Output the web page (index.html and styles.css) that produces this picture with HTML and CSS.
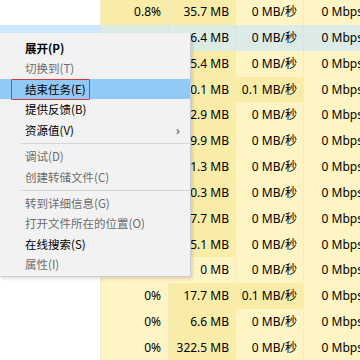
FILE: index.html
```html
<!DOCTYPE html>
<html lang="zh-CN">
  <head>
    <meta charset="UTF-8" />
    <meta name="viewport" content="width=device-width, initial-scale=1.0" />
    <title>任务管理器</title>
    <link rel="stylesheet" href="styles.css">
  </head>
  <body>
    <div class="screen">
      <div class="proc-table">
        <div class="row">
          <div class="cell name"></div>
          <div class="cell cpu heat-2">0.8%</div>
          <div class="cell mem heat-2">35.7 MB</div>
          <div class="cell disk">0 MB/秒</div>
          <div class="cell net">0 Mbps</div>
        </div>
        <div class="row row-selected">
          <div class="cell name"></div>
          <div class="cell cpu">0.6%</div>
          <div class="cell mem">946.4 MB</div>
          <div class="cell disk">0 MB/秒</div>
          <div class="cell net">0 Mbps</div>
        </div>
        <div class="row">
          <div class="cell name"></div>
          <div class="cell cpu">0%</div>
          <div class="cell mem heat-2">15.4 MB</div>
          <div class="cell disk">0 MB/秒</div>
          <div class="cell net">0 Mbps</div>
        </div>
        <div class="row">
          <div class="cell name"></div>
          <div class="cell cpu">0%</div>
          <div class="cell mem heat-2">20.1 MB</div>
          <div class="cell disk heat-2">0.1 MB/秒</div>
          <div class="cell net">0 Mbps</div>
        </div>
        <div class="row">
          <div class="cell name"></div>
          <div class="cell cpu">0%</div>
          <div class="cell mem heat-2">12.9 MB</div>
          <div class="cell disk">0 MB/秒</div>
          <div class="cell net">0 Mbps</div>
        </div>
        <div class="row">
          <div class="cell name"></div>
          <div class="cell cpu">0%</div>
          <div class="cell mem heat-2">29.9 MB</div>
          <div class="cell disk">0 MB/秒</div>
          <div class="cell net">0 Mbps</div>
        </div>
        <div class="row">
          <div class="cell name"></div>
          <div class="cell cpu">0%</div>
          <div class="cell mem heat-2">11.3 MB</div>
          <div class="cell disk">0 MB/秒</div>
          <div class="cell net">0 Mbps</div>
        </div>
        <div class="row">
          <div class="cell name"></div>
          <div class="cell cpu">0%</div>
          <div class="cell mem heat-2">10.3 MB</div>
          <div class="cell disk">0 MB/秒</div>
          <div class="cell net">0 Mbps</div>
        </div>
        <div class="row">
          <div class="cell name"></div>
          <div class="cell cpu">0%</div>
          <div class="cell mem heat-2">17.7 MB</div>
          <div class="cell disk">0 MB/秒</div>
          <div class="cell net">0 Mbps</div>
        </div>
        <div class="row">
          <div class="cell name"></div>
          <div class="cell cpu">0%</div>
          <div class="cell mem heat-2">15.1 MB</div>
          <div class="cell disk">0 MB/秒</div>
          <div class="cell net">0 Mbps</div>
        </div>
        <div class="row">
          <div class="cell name"></div>
          <div class="cell cpu">0%</div>
          <div class="cell mem">0 MB</div>
          <div class="cell disk">0 MB/秒</div>
          <div class="cell net">0 Mbps</div>
        </div>
        <div class="row">
          <div class="cell name"></div>
          <div class="cell cpu">0%</div>
          <div class="cell mem heat-2">17.7 MB</div>
          <div class="cell disk heat-2">0.1 MB/秒</div>
          <div class="cell net">0 Mbps</div>
        </div>
        <div class="row">
          <div class="cell name"></div>
          <div class="cell cpu">0%</div>
          <div class="cell mem heat-2">6.6 MB</div>
          <div class="cell disk">0 MB/秒</div>
          <div class="cell net">0 Mbps</div>
        </div>
        <div class="row">
          <div class="cell name"></div>
          <div class="cell cpu">0%</div>
          <div class="cell mem heat-2">322.5 MB</div>
          <div class="cell disk">0 MB/秒</div>
          <div class="cell net">0 Mbps</div>
        </div>
      </div>

      <ul class="context-menu">
        <li class="menu-item menu-default">展开(P)</li>
        <li class="menu-item disabled">切换到(T)</li>
        <li class="menu-item hover marked">结束任务(E)</li>
        <li class="menu-item">提供反馈(B)</li>
        <li class="menu-item has-sub">资源值(V)<span class="sub-arrow">›</span></li>
        <li class="menu-sep"></li>
        <li class="menu-item disabled">调试(D)</li>
        <li class="menu-item disabled">创建转储文件(C)</li>
        <li class="menu-sep"></li>
        <li class="menu-item disabled">转到详细信息(G)</li>
        <li class="menu-item disabled">打开文件所在的位置(O)</li>
        <li class="menu-item">在线搜索(S)</li>
        <li class="menu-item disabled">属性(I)</li>
      </ul>
    </div>
  </body>
</html>
```

FILE: styles.css
```css
body {
  margin: 0;
  background: #fff;
  font-family: "Segoe UI", "Noto Sans", "Noto Sans CJK SC", sans-serif;
  overflow: hidden;
}
.screen {
  position: relative;
  width: 360px;
  height: 360px;
  overflow: hidden;
}
.proc-table {
  margin-top: -1px;
}
.row {
  display: grid;
  grid-template-columns: 100px 68px 67px 68px 66px;
  height: 25.85px;
}
.cell {
  background: #fff4c4;
  color: #000;
  font-size: 12px;
  line-height: 25.85px;
  text-align: right;
  padding-right: 6px;
  white-space: nowrap;
  border-left: 1px solid #f6ebbc;
}
.cell.name {
  background: #fff;
  border-left: none;
}
.cell.cpu {
  padding-right: 7px;
}
.heat-2 {
  background: #f9eca8;
}
.row-selected .cell {
  background: #dcebe4;
  border-left-color: #d5e5e2;
}
.row-selected .cell.name {
  background: #cce8ff;
}
.row-selected .cell.disk,
.row-selected .cell.net {
  background: #dceae8;
}

.context-menu {
  position: absolute;
  left: 0;
  top: 33px;
  width: 191px;
  height: 244px;
  margin: 0;
  padding: 4.5px 0 0;
  list-style: none;
  box-sizing: border-box;
  background: #f2f2f2;
  border-right: 1px solid #cccccc;
  border-bottom: 1px solid #cccccc;
  box-shadow: 2px 2px 3px rgba(0, 0, 0, 0.12);
  font-family: "Noto Sans CJK SC", "Noto Sans", sans-serif;
  font-size: 11.5px;
}
.menu-item {
  position: relative;
  height: 20.6px;
  line-height: 20.6px;
  padding-left: 25px;
  color: #000;
}
.menu-default {
  font-weight: 700;
}
.menu-item.disabled {
  color: #6d6d6d;
}
.menu-item.hover {
  background: #91c9f7;
}
.menu-item.marked::after {
  content: "";
  position: absolute;
  left: 11px;
  top: 0;
  width: 79px;
  height: 21px;
  box-sizing: border-box;
  border: 1.5px solid #e2323a;
  border-radius: 1px;
}
.sub-arrow {
  position: absolute;
  right: 10px;
  top: 0;
  color: #555;
  font-family: "Noto Sans", sans-serif;
  font-size: 13px;
}
.menu-sep {
  height: 1px;
  margin: 2.5px 0 2px 21px;
  background: #d7d7d7;
}
```
